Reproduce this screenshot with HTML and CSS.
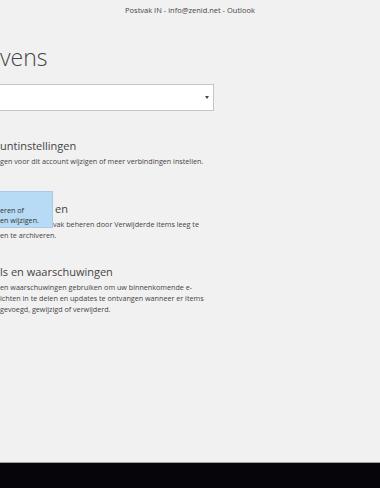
FILE: index.html
```html
<!DOCTYPE html>
<html lang="nl">
<head>
  <meta charset="UTF-8" />
  <title>Postvak IN - info@zenid.net - Outlook</title>
  <link rel="stylesheet" href="styles.css">
</head>
<body>
  <!-- Window title -->
  <div class="titlebar">Postvak IN - info@zenid.net - Outlook</div>

  <!-- Backstage: Gegevens -->
  <div class="backstage">
    <h1 class="page-title">vens</h1>

    <div class="account-select">
      <span class="caret"></span>
    </div>

    <div class="info-section first">
      <h2 class="section-title">untinstellingen</h2>
      <p class="section-text">gen voor dit account wijzigen of meer verbindingen instellen.</p>
    </div>

    <div class="info-section">
      <div class="tooltip">
        <p>eren of</p>
        <p>en wijzigen.</p>
      </div>
      <h2 class="section-title shifted">en</h2>
      <p class="section-text"><span class="shifted">vak beheren door Verwijderde items leeg te</span><br>en te archiveren.</p>
    </div>

    <div class="info-section">
      <h2 class="section-title">ls en waarschuwingen</h2>
      <p class="section-text">en waarschuwingen gebruiken om uw binnenkomende e-<br>ichten in te delen en updates te ontvangen wanneer er items<br>gevoegd, gewijzigd of verwijderd.</p>
    </div>
  </div>

  <!-- Taskbar -->
  <div class="taskbar"></div>
</body>
</html>
```

FILE: styles.css
```css
body {
  margin: 0;
  height: 488px;
  display: flex;
  flex-direction: column;
  background: #f1f1f1;
  font-family: "Open Sans", "Liberation Sans", sans-serif;
  color: #444;
  overflow: hidden;
}

.titlebar {
  height: 20px;
  display: flex;
  align-items: center;
  justify-content: center;
  font-size: 7.5px;
  color: #444;
}

.backstage {
  flex: 1;
}

.page-title {
  margin: 23px 0 0 0;
  font-size: 23px;
  font-weight: 300;
  line-height: 28px;
  color: #444;
}

/* Account dropdown */
.account-select {
  margin: 13px 0 0 -1px;
  width: 213px;
  height: 25px;
  background: #fff;
  border: 1px solid #c6c6c6;
  display: flex;
  align-items: center;
  justify-content: flex-end;
}

.caret {
  width: 0;
  height: 0;
  margin-right: 4px;
  border-left: 2px solid transparent;
  border-right: 2px solid transparent;
  border-top: 3px solid #444;
}

/* Info sections */
.info-section {
  position: relative;
  height: 63px;
}
.info-section.first {
  margin-top: 28px;
}

.section-title {
  margin: 0;
  font-size: 11px;
  font-weight: 400;
  line-height: 14px;
  color: #444;
}

.section-text {
  margin: 3px 0 0 0;
  font-size: 7.2px;
  line-height: 11px;
  color: #444;
}

.shifted {
  padding-left: 55px;
}
.section-text .shifted {
  padding-left: 53px;
}

/* Hover tooltip */
.tooltip {
  position: absolute;
  left: 0;
  top: -11px;
  width: 53px;
  height: 37px;
  box-sizing: border-box;
  padding-top: 13px;
  background: #b7dbf5;
  border: 1px solid #a7cbe8;
  border-left: none;
  font-size: 7.2px;
  line-height: 10px;
  color: #333;
  z-index: 1;
}
.tooltip p {
  margin: 0;
}

.taskbar {
  height: 25px;
  border-top: 1px solid #a3a3a6;
  background: #05050a;
}
```
